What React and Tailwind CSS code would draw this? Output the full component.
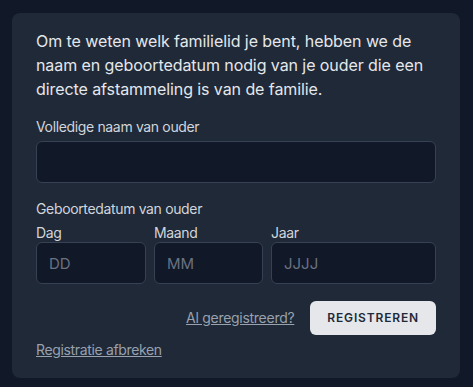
export default function App() {
  return (
    <div
      className="min-h-screen bg-[#111827] px-3 py-[13px]"
      style={{ fontFamily: 'Inter, "Noto Sans", sans-serif' }}
    >
      <div className="w-[448px] rounded-lg bg-[#1f2937] px-6 pt-4 pb-[17px]">
        <p className="text-base leading-6 tracking-[-0.005em] text-gray-200">
          Om te weten welk familielid je bent, hebben we de naam en geboortedatum nodig van je ouder die een
          directe afstammeling is van de familie.
        </p>

        <div className="mt-4">
          <label className="mb-1 block text-sm leading-5 tracking-[-0.025em] text-gray-300">Volledige naam van ouder</label>
          <input
            type="text"
            className="block h-[42px] w-full rounded-md border border-gray-700 bg-[#111827] px-3 text-[15px] text-gray-200 outline-none"
          />
        </div>

        <div className="mt-4">
          <div className="mb-1 text-sm leading-5 tracking-[-0.025em] text-gray-300">Geboortedatum van ouder</div>
          <div className="grid grid-cols-[110px_109px_1fr] gap-2">
            <div>
              <label className="block text-sm leading-[19px] tracking-[-0.025em] text-gray-300">Dag</label>
              <input
                type="text"
                placeholder="DD"
                className="block h-[42px] w-full rounded-md border border-gray-700 bg-[#111827] px-3 text-[15px] text-gray-200 placeholder:text-gray-500 outline-none"
              />
            </div>
            <div>
              <label className="block text-sm leading-[19px] tracking-[-0.025em] text-gray-300">Maand</label>
              <input
                type="text"
                placeholder="MM"
                className="block h-[42px] w-full rounded-md border border-gray-700 bg-[#111827] px-3 text-[15px] text-gray-200 placeholder:text-gray-500 outline-none"
              />
            </div>
            <div>
              <label className="block text-sm leading-[19px] tracking-[-0.025em] text-gray-300">Jaar</label>
              <input
                type="text"
                placeholder="JJJJ"
                className="block h-[42px] w-full rounded-md border border-gray-700 bg-[#111827] px-3 text-[15px] text-gray-200 placeholder:text-gray-500 outline-none"
              />
            </div>
          </div>
        </div>

        <div className="mt-[17px] flex items-center justify-end gap-4">
          <a href="#" className="text-sm tracking-[-0.02em] text-gray-400 underline">
            Al geregistreerd?
          </a>
          <button
            type="button"
            className="h-[34px] rounded-md bg-gray-200 px-[17px] text-xs font-semibold uppercase tracking-[0.07em] text-gray-800"
          >
            Registreren
          </button>
        </div>

        <div className="mt-0.5">
          <a href="#" className="text-sm leading-5 tracking-[-0.025em] text-gray-400 underline">
            Registratie afbreken
          </a>
        </div>
      </div>
    </div>
  );
}
